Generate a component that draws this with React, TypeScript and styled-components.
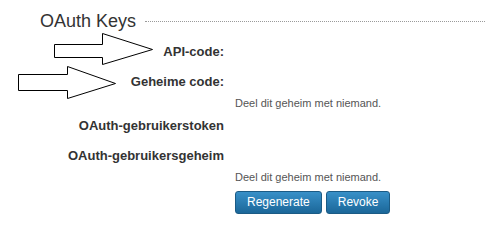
import React from "react";
import styled, { createGlobalStyle } from "styled-components";

const GlobalStyle = createGlobalStyle`
  html, body {
    margin: 0;
    padding: 0;
    background: #fff;
  }
  body {
    font-family: "Liberation Sans", Arial, sans-serif;
  }
`;

const Page = styled.div`
  position: relative;
  width: 485px;
  height: 224px;
  padding-top: 10px;
  box-sizing: border-box;
  overflow: hidden;
`;

const Header = styled.div`
  display: flex;
  align-items: center;
  gap: 9px;
  padding-left: 40px;
`;

const Title = styled.h2`
  margin: 0;
  font-size: 18px;
  line-height: 22px;
  font-weight: normal;
  color: #333;
  white-space: nowrap;
`;

const Rule = styled.div`
  flex: 1;
  height: 0;
  border-top: 1px dotted #9a9a9a;
`;

const Form = styled.div`
  padding-top: 10.5px;
`;

const Field = styled.div<{ $gap?: number }>`
  display: grid;
  grid-template-columns: 224px 1fr;
  column-gap: 11px;
  margin-bottom: ${(p) => (p.$gap ?? 12)}px;
`;

const Label = styled.label`
  grid-column: 1;
  grid-row: 1;
  text-align: right;
  font-size: 13px;
  line-height: 18px;
  font-weight: bold;
  color: #333;
  white-space: nowrap;
`;

const Hint = styled.div`
  grid-column: 2;
  grid-row: 2;
  margin-top: 5px;
  font-size: 11px;
  line-height: 14px;
  color: #555;
  white-space: nowrap;
`;

const Actions = styled.div`
  grid-column: 2;
  grid-row: 1;
  display: flex;
  gap: 4px;
`;

const Button = styled.button`
  height: 23px;
  padding: 0 11px;
  border: 1px solid #1b5b85;
  border-radius: 3px;
  background: linear-gradient(#3890c8, #1b6799);
  color: #fff;
  font-family: "Liberation Sans", Arial, sans-serif;
  font-size: 12px;
  line-height: 21px;
  cursor: pointer;
`;

const Overlay = styled.svg`
  position: absolute;
  top: 0;
  left: 0;
  pointer-events: none;
`;

const ArrowShape = styled.polygon`
  fill: #fff;
  stroke: #000;
  stroke-width: 1;
`;

export default function App() {
  return (
    <>
      <GlobalStyle />
      <Page>
        <Header>
          <Title>OAuth Keys</Title>
          <Rule />
        </Header>
        <Form>
          <Field>
            <Label>API-code:</Label>
          </Field>
          <Field $gap={7}>
            <Label>Geheime code:</Label>
            <Hint>Deel dit geheim met niemand.</Hint>
          </Field>
          <Field>
            <Label>OAuth-gebruikerstoken</Label>
          </Field>
          <Field $gap={7}>
            <Label>OAuth-gebruikersgeheim</Label>
            <Hint>Deel dit geheim met niemand.</Hint>
          </Field>
          <Field>
            <Actions>
              <Button>Regenerate</Button>
              <Button>Revoke</Button>
            </Actions>
          </Field>
        </Form>
        <Overlay width={485} height={224}>
          <ArrowShape points="54.5,44.5 102.5,44.5 102.5,33.5 152.5,49.5 102.5,64.5 102.5,57.5 54.5,57.5" />
          <ArrowShape points="18.5,74.5 67.5,74.5 67.5,66.5 115.5,83.5 67.5,98.5 67.5,90.5 18.5,90.5" />
        </Overlay>
      </Page>
    </>
  );
}
